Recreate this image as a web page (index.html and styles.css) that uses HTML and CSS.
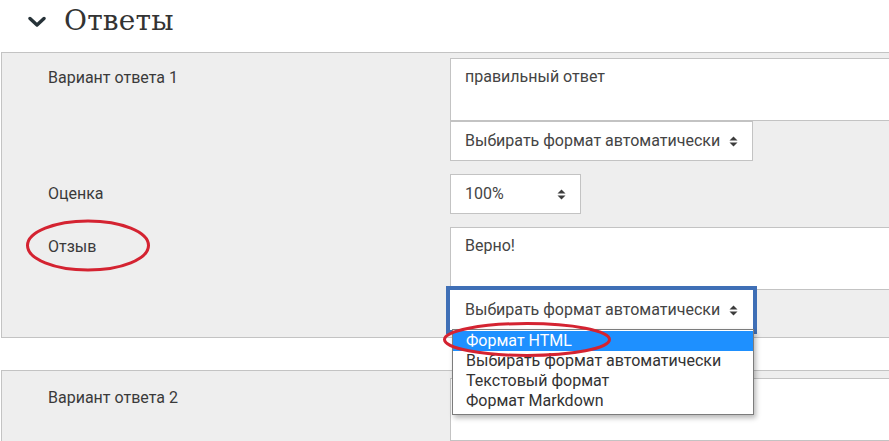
FILE: index.html
```html
<!DOCTYPE html>
<html lang="ru">
<head>
<meta charset="utf-8">
<title>Ответы</title>
<link rel="stylesheet" href="styles.css">
</head>
<body>
<div class="page">
  <div class="heading">
    <svg class="chevron" width="18" height="12" viewBox="0 0 18 12"><polyline points="2,2.5 9,9 16,2.5" fill="none" stroke="#263238" stroke-width="3.4" stroke-linecap="round" stroke-linejoin="round"/></svg>
    <h2 class="title">Ответы</h2>
  </div>

  <div class="panel">
    <div class="row">
      <div class="label">Вариант ответа 1</div>
      <div class="control">
        <div class="textarea">правильный ответ</div>
        <div class="select select-wide"><span>Выбирать формат автоматически</span><svg class="arrows" width="9" height="11" viewBox="0 0 9 11"><path d="M0.5 4.5 L4.5 0.5 L8.5 4.5 Z M0.5 6.5 L4.5 10.5 L8.5 6.5 Z" fill="#3c3c3c"/></svg></div>
      </div>
    </div>
    <div class="row">
      <div class="label">Оценка</div>
      <div class="control">
        <div class="select select-small"><span>100%</span><svg class="arrows" width="9" height="11" viewBox="0 0 9 11"><path d="M0.5 4.5 L4.5 0.5 L8.5 4.5 Z M0.5 6.5 L4.5 10.5 L8.5 6.5 Z" fill="#3c3c3c"/></svg></div>
      </div>
    </div>
    <div class="row">
      <div class="label">Отзыв</div>
      <div class="control">
        <div class="textarea">Верно!</div>
        <div class="select select-wide select-focused"><span>Выбирать формат автоматически</span><svg class="arrows" width="9" height="11" viewBox="0 0 9 11"><path d="M0.5 4.5 L4.5 0.5 L8.5 4.5 Z M0.5 6.5 L4.5 10.5 L8.5 6.5 Z" fill="#3c3c3c"/></svg>
          <ul class="dropdown">
            <li class="option option-active">Формат HTML</li>
            <li class="option">Выбирать формат автоматически</li>
            <li class="option">Текстовый формат</li>
            <li class="option">Формат Markdown</li>
          </ul>
        </div>
      </div>
    </div>
  </div>

  <div class="panel panel-next">
    <div class="row">
      <div class="label">Вариант ответа 2</div>
      <div class="control">
        <div class="textarea"></div>
        <div class="select select-wide"></div>
      </div>
    </div>
  </div>

  <svg class="marks" width="889" height="441" viewBox="0 0 889 441">
    <ellipse cx="88" cy="245.5" rx="60.5" ry="24.5" fill="none" stroke="#d42331" stroke-width="3"/>
    <ellipse cx="527" cy="339.5" rx="82.5" ry="16" fill="none" stroke="#d42331" stroke-width="3"/>
  </svg>
</div>
</body>
</html>
```

FILE: styles.css
```css
html, body {
  margin: 0;
  padding: 0;
  background: #ffffff;
  overflow: hidden;
}

body {
  width: 889px;
  height: 441px;
  font-family: Roboto, "Noto Sans", "Liberation Sans", sans-serif;
  font-size: 16px;
  color: #3a3a3a;
}

.page {
  position: relative;
  width: 889px;
  height: 441px;
  overflow: hidden;
}

.heading {
  height: 52px;
  display: flex;
  align-items: flex-start;
}

.chevron {
  margin: 16px 0 0 28px;
}

.title {
  margin: 3px 0 0 18px;
  font-family: "DejaVu Serif", "Liberation Serif", serif;
  font-weight: normal;
  font-size: 28px;
  line-height: 36px;
  color: #333333;
  letter-spacing: 0.2px;
}

.panel {
  margin-left: 1px;
  width: 1000px;
  background: #eeeeee;
  border: 1px solid #c3c3c3;
  padding: 5px 0 7px 0;
  display: flex;
  flex-direction: column;
  gap: 13px;
}

.panel-next {
  margin-top: 32px;
  padding-top: 7px;
}

.row {
  display: grid;
  grid-template-columns: 448px 1fr;
}

.label {
  padding: 9px 0 0 46px;
  line-height: 22px;
  color: #3a3a3a;
}

.control {
  display: flex;
  flex-direction: column;
  align-items: flex-start;
}

.textarea {
  box-sizing: border-box;
  width: 100%;
  height: 63px;
  background: #ffffff;
  border: 1px solid #c3c3c3;
  padding: 7px 14px;
  line-height: 22px;
  color: #444444;
}

.select {
  position: relative;
  box-sizing: border-box;
  height: 40px;
  background: #ffffff;
  border: 1px solid #c3c3c3;
  padding: 0 14px;
  display: flex;
  align-items: center;
  justify-content: space-between;
  line-height: 22px;
  color: #444444;
}

.select-wide {
  width: 303px;
}

.select-small {
  width: 131px;
}

.select-focused {
  border-color: #ffffff;
  box-shadow: 0 0 0 4px #3f6fb6;
}

.arrows {
  flex: none;
}

.dropdown {
  position: absolute;
  left: 1px;
  top: 38px;
  z-index: 5;
  box-sizing: border-box;
  width: 302px;
  margin: 0;
  padding: 1px 0 3px 0;
  list-style: none;
  background: #ffffff;
  border: 1px solid #7c7c7c;
  box-shadow: 2px 3px 5px rgba(0, 0, 0, 0.28);
}

.option {
  height: 20px;
  line-height: 20px;
  padding-left: 13px;
  color: #333333;
  white-space: nowrap;
}

.option-active {
  background: #1e90ff;
  color: #ffffff;
}

.marks {
  position: absolute;
  left: 0;
  top: 0;
  z-index: 10;
  pointer-events: none;
}
```
